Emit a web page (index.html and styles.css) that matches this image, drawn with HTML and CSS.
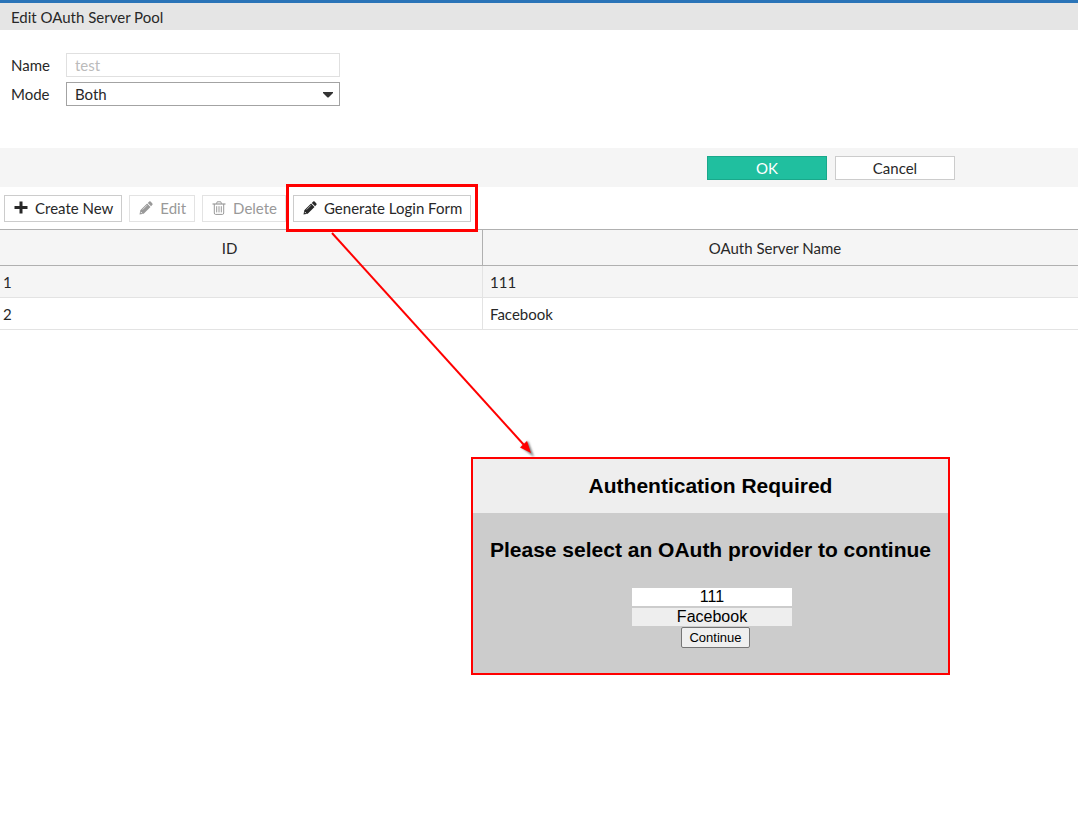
FILE: index.html
```html
<!DOCTYPE html>
<html lang="en">
<head>
<meta charset="utf-8">
<title>Edit OAuth Server Pool</title>
<link rel="stylesheet" href="styles.css">
</head>
<body>
<header class="page-title"><h1>Edit OAuth Server Pool</h1></header>
<main>
  <form class="settings">
    <div class="field">
      <label for="name">Name</label>
      <input class="control" id="name" type="text" value="test" disabled>
    </div>
    <div class="field">
      <label for="mode">Mode</label>
      <div class="select-wrap">
        <select class="control" id="mode"><option>Both</option></select>
        <svg class="caret" viewBox="0 0 10 6" width="10" height="6"><path d="M0 0H10V1L6 5Q5 6 4 5L0 1Z" fill="#333"/></svg>
      </div>
    </div>
  </form>
  <div class="actions">
    <button class="btn btn-primary" type="button">OK</button>
    <button class="btn" type="button">Cancel</button>
  </div>
  <div class="toolbar">
    <button class="tool" type="button">
      <svg class="icon" viewBox="0 0 14 14"><path d="M5.500 .500h3v4.500H13.500v3H8.500V12.500h-3V8H.500v-3h5Z" fill="currentColor"/></svg>
      Create New
    </button>
    <button class="tool" type="button" disabled>
      <svg class="icon" viewBox="0 0 14 14"><path d="M.5 13.500 1.300 9.300 8.100 2.500 11.500 5.900 4.700 12.700ZM8.800 1.900 10.200.6Q10.900 0 11.600.6L13.400 2.400Q14 3.100 13.400 3.800L12.100 5.200Z" fill="currentColor"/><path d="M3.600 8.600 8 4.200" stroke="#fff" stroke-width=".6"/><path d="M1.700 10.900 3.100 12.300" stroke="#fff" stroke-width=".9"/></svg>
      Edit
    </button>
    <button class="tool" type="button" disabled>
      <svg class="icon" viewBox="0 0 14 14" fill="none" stroke="currentColor"><path d="M.5 3H13.500" stroke-width="1.200"/><path d="M4.500 2.800 5.200.8H8.800L9.500 2.800M2.300 3V12Q2.300 13.400 3.500 13.400H10.500Q11.700 13.400 11.700 12V3"/><path d="M4.700 5.200V11.400M7 5.200V11.400M9.300 5.200V11.400"/></svg>
      Delete
    </button>
    <div class="highlighted">
      <button class="tool" type="button">
        <svg class="icon" viewBox="0 0 14 14"><path d="M.5 13.500 1.300 9.300 8.100 2.500 11.500 5.900 4.700 12.700ZM8.800 1.900 10.200.6Q10.900 0 11.600.6L13.400 2.400Q14 3.100 13.400 3.800L12.100 5.200Z" fill="currentColor"/><path d="M3.600 8.600 8 4.200" stroke="#fff" stroke-width=".6"/><path d="M1.700 10.900 3.100 12.300" stroke="#fff" stroke-width=".9"/></svg>
        Generate Login Form
      </button>
    </div>
  </div>
  <table class="servers">
    <thead><tr><th class="col-id" scope="col">ID</th><th scope="col">OAuth Server Name</th></tr></thead>
    <tbody>
      <tr><td>1</td><td>111</td></tr>
      <tr><td>2</td><td>Facebook</td></tr>
    </tbody>
  </table>
</main>
<svg class="arrow" viewBox="0 0 210 230" width="210" height="230">
  <defs><filter id="shade" x="-50%" y="-50%" width="200%" height="200%"><feGaussianBlur stdDeviation="1"/></filter></defs>
  <path d="M204 226 191 216 198 210Z" fill="#777" filter="url(#shade)"/>
  <path d="M2 2 194 214" stroke="#f00" stroke-width="2"/>
  <path d="M201 222 190 216.500 197 210Z" fill="#f00"/>
</svg>
<section class="login">
  <h2 class="login-title">Authentication Required</h2>
  <form class="login-body">
    <h2 class="login-prompt">Please select an OAuth provider to continue</h2>
    <ul class="providers">
      <li class="provider selected">111</li>
      <li class="provider">Facebook</li>
    </ul>
    <button class="continue" type="button">Continue</button>
  </form>
</section>
</body>
</html>
```
FILE: styles.css
```css
* { box-sizing: border-box; }
body {
  margin: 0;
  position: relative;
  min-height: 100vh;
  background: #fff;
  color: #282828;
  font: 15px/20px Lato, sans-serif;
}
button, input, select { font: inherit; color: inherit; }
.page-title {
  padding: 4px 11px 3px;
  border-top: 3px solid #2a74b8;
  background: #e5e5e5;
}
.page-title h1 { margin: 0; font-size: 15px; font-weight: 400; }
.settings {
  display: grid;
  gap: 5px;
  padding: 23px 11px 42px;
}
.field {
  display: grid;
  grid-template-columns: 55px 274px;
  align-items: center;
}
.control {
  display: block;
  width: 100%;
  height: 24px;
  padding: 0 8px;
  border: 1px solid #a3a3a3;
  border-radius: 0;
  background: #fff;
  appearance: none;
}
.control:disabled { border-color: #e0e0e0; color: #bbb; opacity: 1; }
.select-wrap { position: relative; }
.caret { position: absolute; right: 7px; top: 10px; pointer-events: none; }
.actions {
  display: flex;
  justify-content: flex-end;
  gap: 8px;
  padding: 8px 123px 7px 0;
  background: #f5f5f5;
}
.btn {
  width: 120px;
  height: 24px;
  padding: 0;
  border: 1px solid #ccc;
  background: #fff;
}
.btn-primary { background: #20bf9f; border-color: #1aa88b; color: #fff; }
.toolbar { display: flex; gap: 7px; padding: 8px 4px 7px; }
.tool {
  display: flex;
  align-items: center;
  gap: 7px;
  height: 27px;
  padding: 0 8px 2px 9px;
  border: 1px solid #ccc;
  background: #fff;
  white-space: nowrap;
}
.tool:disabled { border-color: #e3e3e3; color: #999; }
.icon { width: 14px; height: 14px; }
.highlighted { position: relative; }
.highlighted::after {
  content: "";
  position: absolute;
  inset: -11px -7px -10px;
  border: 3px solid #f00;
  pointer-events: none;
}
.servers { width: 100%; border-collapse: separate; border-spacing: 0; table-layout: fixed; }
.servers th {
  height: 37px;
  padding: 0 11px 0 0;
  border-top: 1px solid #b0b0b0;
  border-bottom: 1px solid #b0b0b0;
  background: #f5f5f5;
  font-weight: 400;
}
.servers .col-id { width: 483px; padding-right: 23px; border-right: 1px solid #b0b0b0; }
.servers td { height: 32px; padding: 0 7px; border-bottom: 1px solid #e3e3e3; }
.servers td:first-child { padding-left: 3px; border-right: 1px solid #e3e3e3; }
.servers tbody tr:nth-child(odd) { background: #f5f5f5; }
.arrow { position: absolute; left: 330px; top: 231px; pointer-events: none; }
.login {
  position: absolute;
  left: 471px;
  top: 457px;
  width: 479px;
  border: 2px solid #f00;
  background: #ccc;
  color: #000;
  font: 16px/18px "Liberation Sans", Arial, sans-serif;
  text-align: center;
}
.login h2 { margin: 0; font-size: 21px; line-height: 24px; white-space: nowrap; }
.login .login-title { padding: 15px 0; background: #eee; }
.login-body { padding: 25px 0; }
.providers {
  display: grid;
  gap: 2px;
  width: 160px;
  margin: 26px auto 1px 159px;
  padding: 0;
  list-style: none;
}
.provider { background: #eee; }
.provider.selected { background: #fff; }
.continue {
  display: block;
  width: 69px;
  height: 21px;
  margin-left: 208px;
  padding: 0;
  border: 1px solid #767676;
  border-radius: 2px;
  background: #efefef;
  font-size: 13px;
  line-height: 15px;
}
```
